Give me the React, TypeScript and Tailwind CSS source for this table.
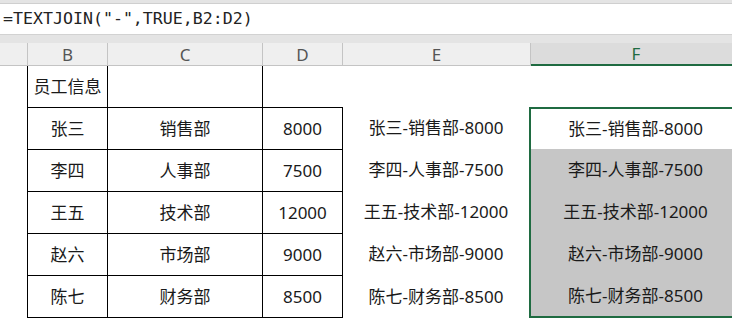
import React from "react";

const rows = [
  { b: "张三", c: "销售部", d: "8000" },
  { b: "李四", c: "人事部", d: "7500" },
  { b: "王五", c: "技术部", d: "12000" },
  { b: "赵六", c: "市场部", d: "9000" },
  { b: "陈七", c: "财务部", d: "8500" },
];

const cellFont = {
  fontFamily: '"Noto Sans", "Noto Sans CJK SC", sans-serif',
} as React.CSSProperties;

export default function App() {
  return (
    <div className="w-[732px] h-[322px] overflow-hidden bg-white text-[#1a1a1a]" style={cellFont}>
      {/* top strip */}
      <div className="h-[4px] bg-[#e4e4e4] border-b border-[#cfcfcf]" />
      {/* formula bar */}
      <div className="h-[30px] bg-white flex items-center pl-[3px]">
        <span
          className="text-[16.6px] text-[#222] whitespace-pre"
          style={{ fontFamily: '"DejaVu Sans Mono", monospace' }}
        >
          =TEXTJOIN("-",TRUE,B2:D2)
        </span>
      </div>
      {/* gap */}
      <div className="h-[9px] bg-[#e4e4e4] border-t border-[#d2d2d2]" />
      {/* column headers */}
      <div className="flex h-[23px] text-[17px] text-[#555] leading-none">
        <div className="w-[28px] shrink-0 bg-[#efefef] border-b border-r border-[#c4c4c4]" />
        <div className="w-[80px] shrink-0 bg-[#efefef] border-b border-r border-[#c4c4c4] flex items-center justify-center">B</div>
        <div className="w-[155px] shrink-0 bg-[#efefef] border-b border-r border-[#c4c4c4] flex items-center justify-center">C</div>
        <div className="w-[80px] shrink-0 bg-[#efefef] border-b border-r border-[#c4c4c4] flex items-center justify-center">D</div>
        <div className="w-[188px] shrink-0 bg-[#efefef] border-b border-r border-[#c4c4c4] flex items-center justify-center">E</div>
        <div className="w-[210px] shrink-0 bg-[#dcdcdc] border-b-2 border-[#1f6b41] text-[#1f6b41] flex items-center justify-center">F</div>
      </div>
      {/* row 1 */}
      <div className="flex h-[41px] text-[17px]">
        <div className="w-[27px] shrink-0" />
        <div className="w-[81px] shrink-0 border-l border-r border-black flex items-center justify-center">员工信息</div>
        <div className="w-[155px] shrink-0 border-r border-black" />
        <div className="w-[80px] shrink-0" />
        <div className="w-[186px] shrink-0" />
        <div className="w-[211px] shrink-0" />
      </div>
      {rows.map((r, i) => {
        const last = i === rows.length - 1;
        const first = i === 0;
        const bd = last ? "border-t border-b border-black" : "border-t border-black";
        return (
          <div key={r.b} className={`flex text-[17px] ${last ? "h-[43px]" : "h-[42px]"}`}>
            <div className="w-[27px] shrink-0" />
            <div className={`w-[81px] shrink-0 border-l border-r ${bd} flex items-center justify-center`}>{r.b}</div>
            <div className={`w-[155px] shrink-0 border-r ${bd} flex items-center justify-center`}>{r.c}</div>
            <div className={`w-[80px] shrink-0 border-r ${bd} flex items-center justify-center`}>{r.d}</div>
            <div className="w-[186px] shrink-0 flex items-center justify-center">
              {r.b}-{r.c}-{r.d}
            </div>
            <div
              className={`w-[211px] shrink-0 border-l-2 border-[#1f6b41] flex items-center justify-center ${
                first ? "border-t-2 bg-white" : "bg-[#c6c6c6]"
              } ${last ? "border-b-2" : ""}`}
            >
              {r.b}-{r.c}-{r.d}
            </div>
          </div>
        );
      })}
    </div>
  );
}
